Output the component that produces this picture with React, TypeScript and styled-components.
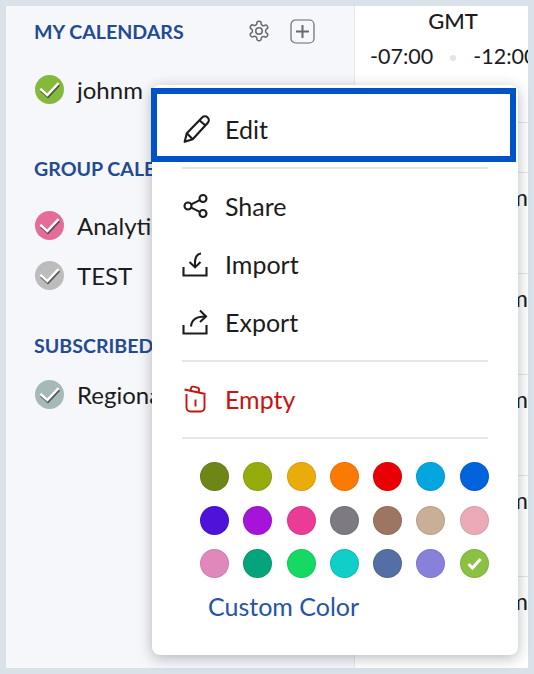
import styled, { createGlobalStyle } from "styled-components";

const GlobalStyle = createGlobalStyle`
  html, body {
    margin: 0;
    padding: 0;
    background: #d8e2e8;
  }
  * {
    box-sizing: border-box;
  }
`;

const Page = styled.div`
  position: relative;
  width: 534px;
  height: 674px;
  padding: 6px 6px 6px 6px;
  font-family: Lato, "Liberation Sans", sans-serif;
  color: #1c1c1e;
  overflow: hidden;
`;

const Frame = styled.div`
  display: flex;
  height: 662px;
  background: #fff;
  overflow: hidden;
`;

const Sidebar = styled.aside`
  flex: 0 0 349px;
  background: #f6f7fa;
  border-right: 1px solid #e6e8ec;
  padding: 14px 0 0 28px;
`;

const SectionHead = styled.div<{ $gap: number }>`
  display: flex;
  align-items: center;
  height: 22px;
  margin-top: ${(p) => p.$gap}px;
`;

const SectionTitle = styled.h2`
  margin: 0;
  font-size: 19.6px;
  font-weight: 700;
  color: #234a94;
  white-space: nowrap;
`;

const HeadTools = styled.div`
  display: flex;
  align-items: center;
  gap: 18px;
  margin-left: 62px;
`;

const CalendarRow = styled.div<{ $gap: number }>`
  display: flex;
  align-items: center;
  gap: 13px;
  height: 30px;
  margin-top: ${(p) => p.$gap}px;
  font-size: 24px;
  white-space: nowrap;
`;

const Main = styled.main`
  flex: 1;
  min-width: 0;
  overflow: hidden;
`;

const TimeHead = styled.div`
  height: 117px;
  padding-top: 1px;
  border-bottom: 1px solid #e4e6ea;
`;

const Gmt = styled.div`
  width: 196px;
  text-align: center;
  font-size: 22px;
  font-weight: 500;
  line-height: 28px;
`;

const Zones = styled.div`
  display: flex;
  align-items: center;
  width: 260px;
  margin-top: 6px;
  padding-left: 15px;
  font-size: 21.5px;
  line-height: 30px;
`;

const ZoneDot = styled.span`
  width: 6px;
  height: 6px;
  margin: 4px 17px 0 17px;
  border-radius: 50%;
  background: #e4e4e6;
`;

const AllDay = styled.div`
  height: 50px;
  border-bottom: 1px solid #e4e6ea;
`;

const HourRow = styled.div`
  display: flex;
  justify-content: flex-end;
  height: 101px;
  padding: 9px 0 0 0;
  border-bottom: 1px solid #e4e6ea;
  font-size: 24px;
  line-height: 30px;
  white-space: nowrap;
`;

const Menu = styled.div`
  position: absolute;
  left: 152px;
  top: 85px;
  width: 366px;
  height: 570px;
  padding-top: 3px;
  background: #fff;
  border-radius: 8px;
  box-shadow: 0 3px 14px rgba(30, 40, 50, 0.32);
`;

const EditItem = styled.div`
  display: flex;
  align-items: center;
  gap: 13px;
  width: 365px;
  height: 74px;
  margin-left: -1px;
  padding: 8px 0 0 25px;
  border: 6px solid #0052c9;
  font-size: 25px;
`;

const Divider = styled.div<{ $top: number; $bottom: number }>`
  height: 2px;
  margin: ${(p) => p.$top}px 30px ${(p) => p.$bottom}px;
  background: #e4e6ea;
`;

const MenuItem = styled.div<{ $danger?: boolean; $gap?: number }>`
  display: flex;
  align-items: center;
  gap: 17px;
  height: 30px;
  margin-top: ${(p) => p.$gap ?? 0}px;
  padding-left: 30px;
  font-size: 25px;
  color: ${(p) => (p.$danger ? "#c9130f" : "#1c1c1e")};
`;

const Swatches = styled.div`
  display: grid;
  grid-template-columns: repeat(7, 29px);
  column-gap: 14.3px;
  row-gap: 14.5px;
  margin: 23px 0 0 48px;
`;

const Swatch = styled.span<{ $color: string }>`
  display: flex;
  align-items: center;
  justify-content: center;
  width: 29px;
  height: 29px;
  border-radius: 50%;
  background: ${(p) => p.$color};
  border: 1px solid rgba(0, 0, 0, 0.08);
`;

const CustomColor = styled.div`
  margin: 13px 0 0 56px;
  font-size: 25px;
  line-height: 30px;
  color: #2554a8;
`;

const CalendarDot = styled.span<{ $color: string }>`
  display: flex;
  flex: 0 0 29px;
  align-items: center;
  justify-content: center;
  width: 29px;
  height: 29px;
  margin-left: 1px;
  border-radius: 50%;
  background: ${(p) => p.$color};
`;

const GearIcon = () => (
  <svg width="26" height="26" viewBox="0 0 24 24" fill="none" stroke="#67696e" strokeWidth="1.4" strokeLinejoin="round">
    <path d="M12.2 3h-.4a1.8 1.8 0 0 0-1.8 1.8v.2a1.8 1.8 0 0 1-.9 1.5l-.4.2a1.8 1.8 0 0 1-1.8 0l-.1-.1a1.8 1.8 0 0 0-2.4.7l-.2.3a1.8 1.8 0 0 0 .6 2.4l.2.1a1.8 1.8 0 0 1 .9 1.5v.5a1.8 1.8 0 0 1-.9 1.6l-.2.1a1.8 1.8 0 0 0-.6 2.4l.2.3a1.8 1.8 0 0 0 2.4.7l.1-.1a1.8 1.8 0 0 1 1.8 0l.4.2a1.8 1.8 0 0 1 .9 1.5v.2A1.8 1.8 0 0 0 11.8 21h.4a1.8 1.8 0 0 0 1.8-1.8V19a1.8 1.8 0 0 1 .9-1.5l.4-.2a1.8 1.8 0 0 1 1.8 0l.1.1a1.8 1.8 0 0 0 2.4-.7l.2-.3a1.8 1.8 0 0 0-.6-2.4l-.2-.1a1.8 1.8 0 0 1-.9-1.6v-.5a1.8 1.8 0 0 1 .9-1.5l.2-.1a1.8 1.8 0 0 0 .6-2.4l-.2-.3a1.8 1.8 0 0 0-2.4-.7l-.1.1a1.8 1.8 0 0 1-1.8 0l-.4-.2A1.8 1.8 0 0 1 14 5v-.2A1.8 1.8 0 0 0 12.2 3Z" />
    <circle cx="12" cy="12" r="3" />
  </svg>
);

const PlusBoxIcon = () => (
  <svg width="25" height="25" viewBox="0 0 25 25" fill="none" stroke="#67696e">
    <rect x="1" y="1" width="23" height="23" rx="4.5" strokeWidth="1.2" />
    <path d="M12.5 6v13M6 12.5h13" strokeWidth="2" />
  </svg>
);

const DotCheck = () => (
  <svg width="23" height="20" viewBox="0 0 21 18" fill="none" strokeLinecap="square">
    <path d="M3 9.5l5.5 5L18 4.5" stroke="#3c3c3c" strokeOpacity="0.8" strokeWidth="2.2" transform="translate(0.6 1.6)" />
    <path d="M3 9.5l5.5 5L18 4.5" stroke="#fff" strokeWidth="2.2" />
  </svg>
);

const PencilIcon = () => (
  <svg width="30" height="30" viewBox="0 0 28 28" fill="none" stroke="#1c1c1e" strokeWidth="2" strokeLinejoin="round">
    <path d="M2.5 26l2-8L18.8 3.2a3.6 3.6 0 0 1 5.1 0 3.6 3.6 0 0 1 .2 5L10 23.5 2.5 26Z" />
    <path d="M16.5 6l5.6 5" />
    <path d="M4.5 18l5.5 5.5" />
  </svg>
);

const ShareIcon = () => (
  <svg width="26" height="26" viewBox="0 0 26 26" fill="none" stroke="#1c1c1e" strokeWidth="2.1">
    <circle cx="6" cy="13" r="3.5" />
    <circle cx="21" cy="5.5" r="3.5" />
    <circle cx="21" cy="20.5" r="3.5" />
    <path d="M9.2 11.4l8.6-4.3M9.2 14.6l8.6 4.3" />
  </svg>
);

const ImportIcon = () => (
  <svg width="26" height="28" viewBox="0 0 26 28" fill="none" stroke="#1c1c1e" strokeWidth="2.1">
    <path d="M1.5 17v8.5h23V17" />
    <path d="M19 3.5C14.5 4 12.5 8 13 16" />
    <path d="M7.5 12l5.6 5.4L18.5 12" />
  </svg>
);

const ExportIcon = () => (
  <svg width="26" height="28" viewBox="0 0 26 28" fill="none" stroke="#1c1c1e" strokeWidth="2.1">
    <path d="M1.5 17v8.5h23V17" />
    <path d="M9 18.5C9.5 12 14 8.5 23 8.5" />
    <path d="M18 2.5l6 6-6 5.5" />
  </svg>
);

const TrashIcon = () => (
  <svg width="26" height="30" viewBox="-1 0 26 30" fill="none" stroke="#c9130f" strokeWidth="1.9" strokeLinejoin="round">
    <path d="M1.5 5.5l21 4.5" />
    <path d="M7.5 6.5l.6-2.4a2 2 0 0 1 2.4-1.4l4 .9a2 2 0 0 1 1.5 2.3l-.4 2.4" />
    <path d="M3.5 10v13.5a4 4 0 0 0 4 4h10a4 4 0 0 0 4-4V11" />
    <path d="M12.5 15.5v7" />
  </svg>
);

const swatchColors = [
  "#6e8618", "#96ab0e", "#e9ac0b", "#fb7a03", "#e90005", "#03a6df", "#0263dd",
  "#4f12d8", "#a514d8", "#ea3b96", "#7d7a82", "#9e7562", "#c9af98", "#eaabb6",
  "#e088bb", "#06a47a", "#16d964", "#0fcfc8", "#546fa6", "#8881dc", "#8bc043",
];

const selectedColor = "#8bc043";

const hourLabels = ["12 am", "1 am", "2 am", "3 am", "4 am"];

function App() {
  return (
    <Page>
      <GlobalStyle />
      <Frame>
        <Sidebar>
          <SectionHead $gap={0}>
            <SectionTitle>MY CALENDARS</SectionTitle>
            <HeadTools>
              <GearIcon />
              <PlusBoxIcon />
            </HeadTools>
          </SectionHead>
          <CalendarRow $gap={32}>
            <CalendarDot $color="#84b93b"><DotCheck /></CalendarDot>
            johnm
          </CalendarRow>

          <SectionHead $gap={53}>
            <SectionTitle>GROUP CALENDARS</SectionTitle>
          </SectionHead>
          <CalendarRow $gap={31}>
            <CalendarDot $color="#e56c98"><DotCheck /></CalendarDot>
            Analytics
          </CalendarRow>
          <CalendarRow $gap={20}>
            <CalendarDot $color="#bcbcbc"><DotCheck /></CalendarDot>
            TEST
          </CalendarRow>

          <SectionHead $gap={44}>
            <SectionTitle>SUBSCRIBED CALENDARS</SectionTitle>
          </SectionHead>
          <CalendarRow $gap={23}>
            <CalendarDot $color="#a5bab8"><DotCheck /></CalendarDot>
            Regional Holidays
          </CalendarRow>
        </Sidebar>

        <Main>
          <TimeHead>
            <Gmt>GMT</Gmt>
            <Zones>
              -07:00
              <ZoneDot />
              -12:00
            </Zones>
          </TimeHead>
          <AllDay />
          {hourLabels.map((label) => (
            <HourRow key={label}>{label}</HourRow>
          ))}
        </Main>
      </Frame>

      <Menu>
        <EditItem>
          <PencilIcon />
          Edit
        </EditItem>
        <Divider $top={5} $bottom={22} />
        <MenuItem>
          <ShareIcon />
          Share
        </MenuItem>
        <MenuItem $gap={28}>
          <ImportIcon />
          Import
        </MenuItem>
        <MenuItem $gap={28}>
          <ExportIcon />
          Export
        </MenuItem>
        <Divider $top={23} $bottom={22} />
        <MenuItem $danger>
          <TrashIcon />
          Empty
        </MenuItem>
        <Divider $top={23} $bottom={0} />
        <Swatches>
          {swatchColors.map((color) => (
            <Swatch key={color} $color={color}>
              {color === selectedColor && (
                <svg width="17" height="15" viewBox="0 0 17 15" fill="none" stroke="#fff" strokeWidth="3">
                  <path d="M2.5 8l4 4 8-9" />
                </svg>
              )}
            </Swatch>
          ))}
        </Swatches>
        <CustomColor>Custom Color</CustomColor>
      </Menu>
    </Page>
  );
}

export default App;
